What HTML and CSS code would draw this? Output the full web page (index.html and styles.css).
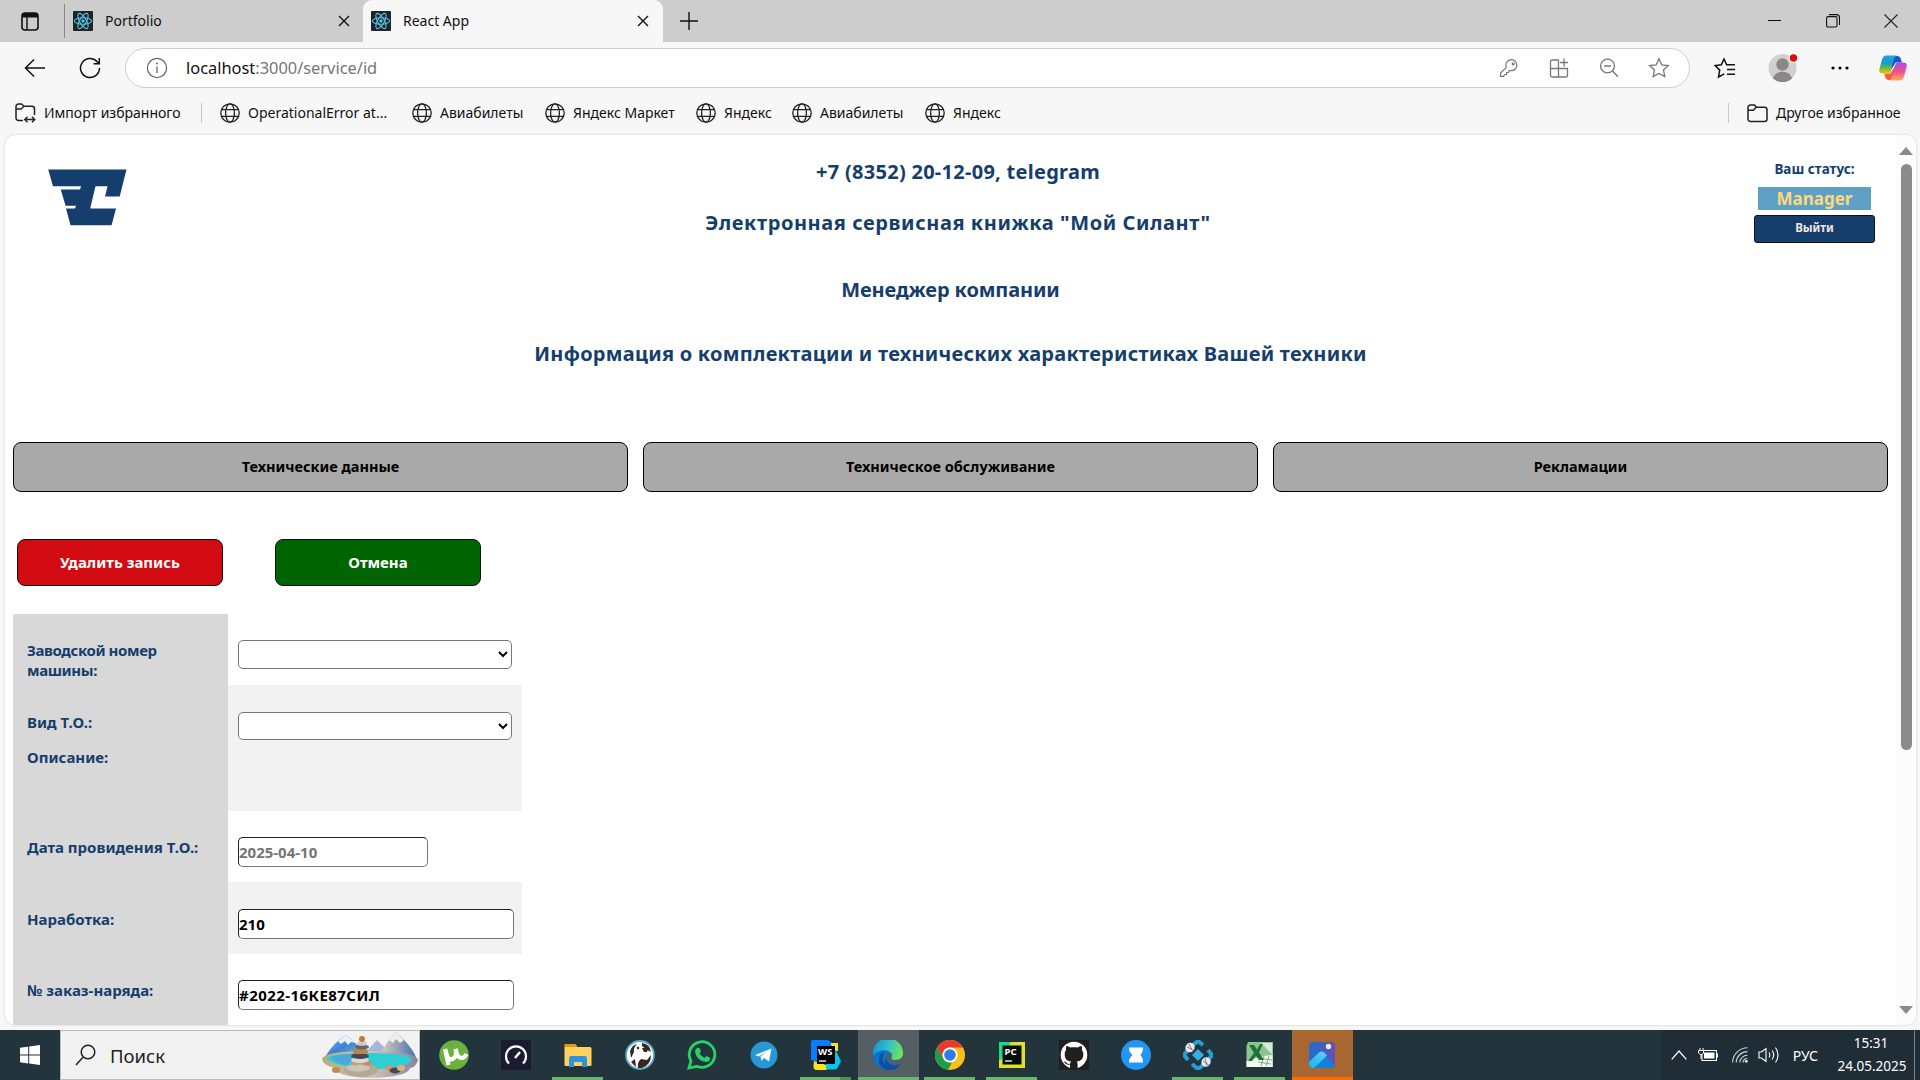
FILE: index.html
```html
<!DOCTYPE html>
<html lang="ru">
<head>
<meta charset="utf-8">
<title>React App</title>
<link rel="stylesheet" href="styles.css">
</head>
<body>
<svg class="defs" width="0" height="0">
  <defs>
    <symbol id="react" viewBox="0 0 20 20">
      <rect width="20" height="20" rx="1" fill="#20232a"/>
      <g fill="none" stroke="#57c4e0" stroke-width="1.1">
        <ellipse cx="10" cy="10" rx="8.6" ry="3.3"/>
        <ellipse cx="10" cy="10" rx="8.6" ry="3.3" transform="rotate(60 10 10)"/>
        <ellipse cx="10" cy="10" rx="8.6" ry="3.3" transform="rotate(120 10 10)"/>
      </g>
      <circle cx="10" cy="10" r="1.7" fill="#57c4e0"/>
    </symbol>
    <symbol id="cross" viewBox="0 0 12 12"><path d="M1 1l10 10M11 1L1 11" fill="none" stroke="#111" stroke-width="1.4"/></symbol>
    <symbol id="globe" viewBox="0 0 20 20">
      <g fill="none" stroke="#222" stroke-width="1.3"><circle cx="10" cy="10" r="9.2"/><ellipse cx="10" cy="10" rx="4.4" ry="9.2"/><path d="M1.6 6.6h16.8M1.6 13.4h16.8"/></g>
    </symbol>
  </defs>
</svg>

<div class="tabbar">
  <div class="workspace"><svg width="18" height="19" viewBox="0 0 18 19"><rect x="1" y="1" width="16" height="17" rx="3" fill="none" stroke="#111" stroke-width="1.6"/><path d="M1 5.5V4a3 3 0 013-3h10a3 3 0 013 3v1.500z" fill="#111"/><path d="M6 5v13" stroke="#111" stroke-width="1.4"/></svg></div>
  <div class="tab"><svg width="20" height="20"><use href="#react"/></svg><span>Portfolio</span><svg class="close" width="12" height="12"><use href="#cross"/></svg></div>
  <div class="tab active"><svg width="20" height="20"><use href="#react"/></svg><span>React App</span><svg class="close" width="12" height="12"><use href="#cross"/></svg></div>
  <svg class="newtab" width="18" height="18" viewBox="0 0 18 18"><path d="M9 0v18M0 9h18" stroke="#111" stroke-width="1.4"/></svg>
  <div class="winctl">
    <svg width="14" height="14" viewBox="0 0 14 14"><path d="M0 6.500h13" stroke="#111"/></svg>
    <svg width="14" height="14" viewBox="0 0 14 14"><g fill="none" stroke="#111" stroke-width="1.100"><rect x=".6" y="2.600" width="10.400" height="10.400" rx="1.500"/><path d="M3 .6h7.500a3 3 0 013 3V11"/></g></svg>
    <svg width="14" height="14" viewBox="0 0 14 14"><path d="M.5.5l13 13M13.500.5l-13 13" stroke="#222" stroke-width="1.100"/></svg>
  </div>
</div>

<div class="toolbar">
  <div class="cell"><svg width="22" height="20" viewBox="0 0 22 20"><path d="M21 10H1.500M10 1.500L1.500 10l8.500 8.500" fill="none" stroke="#111" stroke-width="1.500"/></svg></div>
  <div class="cell"><svg width="22" height="22" viewBox="0 0 22 22"><path d="M20.500 11A9.500 9.500 0 1118 4.600L20 6.500M20.300 1v5.700h-5.700" fill="none" stroke="#111" stroke-width="1.500"/></svg></div>
  <div class="address">
    <svg class="info" width="22" height="22" viewBox="0 0 22 22"><circle cx="11" cy="11" r="9.600" fill="none" stroke="#666" stroke-width="1.200"/><path d="M11 9.500V16" stroke="#666" stroke-width="1.300"/><circle cx="11" cy="6.600" r="1" fill="#666"/></svg>
    <div class="url"><b>localhost</b>:3000/service/id</div>
    <div class="acts">
      <svg width="20" height="20" viewBox="0 0 20 20"><g fill="none" stroke="#777" stroke-width="1.200"><path d="M7.300 9.400A5.500 5.500 0 1112 12.700l-1.700-.1-.9 1.900H7.600v2H5.800L4.500 18.400H1.600v-3.300z"/><circle cx="14.200" cy="5.800" r="1"/></g></svg>
      <svg width="20" height="20" viewBox="0 0 20 20"><g fill="none" stroke="#777" stroke-width="1.300"><path d="M9.500 2H3.200A1.700 1.700 0 001.500 3.700v13.600A1.700 1.700 0 003.200 19h13.600a1.700 1.700 0 001.700-1.700v-6.800h-17M9.500 2v17M15 .5v8M11 4.500h8"/></g></svg>
      <svg width="20" height="20" viewBox="0 0 20 20"><g fill="none" stroke="#777" stroke-width="1.400"><circle cx="8.500" cy="8" r="6.900"/><path d="M5 8h7M13.500 13l5.500 5.800"/></g></svg>
      <svg width="22" height="22" viewBox="0 0 22 22"><path d="M11 1.800l2.800 6 6.600.8-4.900 4.500 1.300 6.500L11 16.400l-5.800 3.200 1.300-6.500L1.600 8.600l6.600-.8z" fill="none" stroke="#777" stroke-width="1.300"/></svg>
    </div>
  </div>
  <div class="cell"><svg width="22" height="22" viewBox="0 0 22 22"><g fill="none" stroke="#111" stroke-width="1.500"><path d="M13 7.800h-.4L10 2 7.300 7.800 1.200 8.600l4.500 4.500L4.500 20l5.800-3.200M13 7.800h8M13 12.500h8M13 17.200h8"/></g></svg></div>
  <div class="cell"><svg width="32" height="34" viewBox="0 0 32 34"><circle cx="15.500" cy="17" r="14" fill="#d2d0ce"/><circle cx="15.500" cy="13.500" r="6.200" fill="#8a8886"/><path d="M5.800 27.200a10.500 10.500 0 0119.400 0A14 14 0 015.800 27.200z" fill="#8a8886"/><circle cx="26.500" cy="7" r="5" fill="#f7f7f7"/><circle cx="26.500" cy="7" r="3.700" fill="#e00b0b"/></svg></div>
  <div class="cell"><svg width="18" height="4" viewBox="0 0 18 4"><circle cx="2" cy="2" r="1.600"/><circle cx="9" cy="2" r="1.600"/><circle cx="16" cy="2" r="1.600"/></svg></div>
  <div class="cell"><svg width="28" height="26" viewBox="0 0 28 26">
    <defs>
      <linearGradient id="cpA" x1="0" y1="0" x2="0" y2="1"><stop offset="0" stop-color="#1ba4ee"/><stop offset=".45" stop-color="#1b9ac0"/><stop offset=".7" stop-color="#6fbb3c"/><stop offset="1" stop-color="#f2c500"/></linearGradient>
      <linearGradient id="cpB" x1="0" y1="0" x2="0" y2="1"><stop offset="0" stop-color="#a64bf0"/><stop offset=".5" stop-color="#ee5090"/><stop offset="1" stop-color="#ffab5c"/></linearGradient>
    </defs>
    <path d="M7 1h11q3 0 3.800 3l1 3.500h-6L10 18z" fill="#1555cf"/>
    <path d="M21 25H10q-3 0-3.800-3l-1-3.500h6L18 8z" fill="#f1613f"/>
    <path d="M7.500.5H18q-2.400.8-3.200 4L12 15.500q-.8 3-3.800 3H3.400Q-.4 18.500.4 14L3 4.500Q4.200.5 7.500.5z" fill="url(#cpA)"/>
    <path d="M20.500 25.500H10q2.400-.8 3.200-4L16 10.500q.8-3 3.800-3h4.800q3.800 0 3 4.500L25 21.500q-1.200 4-4.500 4z" fill="url(#cpB)"/>
  </svg></div>
</div>

<div class="bookmarks">
  <div class="bm"><svg width="21" height="20" viewBox="0 0 21 20"><g fill="none" stroke="#222" stroke-width="1.500"><path d="M8 17.500H3.500A2.500 2.500 0 011 15V3.500A2.500 2.500 0 013.500 1h3l2.500 2.300h8A2.500 2.500 0 0119.500 5.800V12M1 6h5l3-2.700M10 16.500h9.500M12.500 13.800L9.800 16.500l2.700 2.700M17 13.800l2.700 2.700L17 19.200"/></g></svg><span>Импорт избранного</span></div>
  <i class="sep"></i>
  <div class="bm"><svg width="20" height="20"><use href="#globe"/></svg><span>OperationalError at...</span></div>
  <div class="bm"><svg width="20" height="20"><use href="#globe"/></svg><span>Авиабилеты</span></div>
  <div class="bm"><svg width="20" height="20"><use href="#globe"/></svg><span>Яндекс Маркет</span></div>
  <div class="bm"><svg width="20" height="20"><use href="#globe"/></svg><span>Яндекс</span></div>
  <div class="bm"><svg width="20" height="20"><use href="#globe"/></svg><span>Авиабилеты</span></div>
  <div class="bm"><svg width="20" height="20"><use href="#globe"/></svg><span>Яндекс</span></div>
  <i class="sep"></i>
  <div class="bm"><svg width="21" height="19" viewBox="0 0 21 19"><path d="M1 6.200h5.300l3-2.900L7.500 1h-4A2.500 2.500 0 001 3.500V15A2.500 2.500 0 003.500 17.500h14A2.500 2.500 0 0020 15V5.800a2.500 2.500 0 00-2.500-2.500H9.300" fill="none" stroke="#222" stroke-width="1.500"/></svg><span>Другое избранное</span></div>
</div>

<div class="viewport">
  <main class="page">
    <header class="top">
      <div class="logo"><svg width="79" height="57" viewBox="48 168.500 79 57"><path fill="#163e6c" d="M48.200 169h78.300l-6.800 27H105l2.600-10.300H95.500L90.200 208H116l-4.400 16.700H70.500L66 208h9l1-2.700H65.600L60.700 189H80l1-3.300H53z"/></svg></div>
      <div class="titles">
        <div class="phone">+7 (8352) 20-12-09, telegram</div>
        <div class="title">Электронная сервисная книжка "Мой Силант"</div>
      </div>
      <div class="status">
        <div class="status-label">Ваш статус:</div>
        <div class="role">Manager</div>
        <button class="logout">Выйти</button>
      </div>
    </header>
    <h2 class="manager">Менеджер компании</h2>
    <h2 class="about">Информация о комплектации и технических характеристиках Вашей техники</h2>
    <nav class="nav"><button>Технические данные</button><button>Техническое обслуживание</button><button>Рекламации</button></nav>
    <div class="actions"><button class="delete">Удалить запись</button><button class="cancel">Отмена</button></div>
    <form class="form">
      <div class="row r1"><label class="tight">Заводской номер<br>машины:</label><div class="field"><select class="tall"></select></div></div>
      <div class="row r2 alt"><label>Вид Т.О.:<span class="desc">Описание:</span></label><div class="field"><select></select></div></div>
      <div class="row r3"><label>Дата провидения Т.О.:</label><div class="field"><input class="short" placeholder="2025-04-10"></div></div>
      <div class="row r4 alt"><label>Наработка:</label><div class="field"><input value="210"></div></div>
      <div class="row r5"><label>№ заказ-наряда:</label><div class="field"><input class="order" value="#2022-16КЕ87СИЛ"></div></div>
    </form>
  </main>
  <div class="scroll">
    <svg width="14" height="8" viewBox="0 0 14 8"><path d="M7 0l7 8H0z" fill="#8b8b8b"/></svg>
    <div class="thumb"></div>
    <svg class="down" width="14" height="8" viewBox="0 0 14 8"><path d="M7 8l7-8H0z" fill="#8b8b8b"/></svg>
  </div>
</div>

<div class="taskbar">
  <div class="start"><svg width="20" height="20" viewBox="0 0 20 20"><path fill="#fff" d="M0 2.800L8.200 1.700v7.900H0zM9.200 1.500L20 0v9.600H9.200zM0 10.500h8.200v7.900L0 17.300zM9.200 10.500H20V20L9.200 18.600z"/></svg></div>
  <div class="search">
    <svg width="21" height="22" viewBox="0 0 21 22"><g fill="none" stroke="#222" stroke-width="1.500"><circle cx="13" cy="8" r="6.800"/><path d="M8.200 13L1 21"/></g></svg>
    <span>Поиск</span>
    <svg class="scene" width="96" height="46" viewBox="0 0 96 46">
      <defs><linearGradient id="mtA" x1="0" y1="0" x2="1" y2="1"><stop offset="0" stop-color="#8dbbe8"/><stop offset=".5" stop-color="#3b83cf"/><stop offset="1" stop-color="#8fb6dc"/></linearGradient>
      <linearGradient id="mtB" x1="0" y1="0" x2="1" y2="0"><stop offset="0" stop-color="#d8cfc6"/><stop offset=".5" stop-color="#94a3b5"/><stop offset="1" stop-color="#3a72b5"/></linearGradient>
      <linearGradient id="sand" x1="0" y1="0" x2="1" y2="0"><stop offset="0" stop-color="#b5ab7c"/><stop offset=".5" stop-color="#d6c6b8"/><stop offset="1" stop-color="#8d7f9d"/></linearGradient></defs>
      <path d="M44 20l11-12 12 12z" fill="#a9b4d8"/>
      <path d="M3 25Q12 10 24 3q12 8 18 21z" fill="url(#mtA)"/><path d="M16 9l8-6 10 8-5-1-3 3-3-4-4 3z" fill="#eaf1f8"/>
      <path d="M58 22Q66 8 74 0q14 12 20 25z" fill="url(#mtB)"/><path d="M67 8l7-8 8 8-4 3-4-4-3 4z" fill="#f1eeea"/>
      <path d="M0 27q2-8 48-8t48 9q-2 7-8 8-2 9-40 10-32-1-36-10Q1 33 0 27z" fill="url(#sand)"/>
      <path d="M5 26q6-5 43-5t42 6q-2 9-40 10Q10 35 5 26z" fill="#2ccfd4"/><path d="M9 25q8-3 30-4L24 33q-14-3-15-8z" fill="#4aa9d9"/>
      <ellipse cx="39" cy="38" rx="17" ry="7" fill="#b3a797"/><ellipse cx="36" cy="36" rx="12" ry="3.500" fill="#cfc5b7"/>
      <ellipse cx="33" cy="31" rx="4" ry="2.500" fill="#d39a62"/><ellipse cx="45" cy="31" rx="4" ry="2.500" fill="#c98b52"/>
      <ellipse cx="38" cy="28" rx="9" ry="3" fill="#d9dadd"/><ellipse cx="38" cy="24" rx="9" ry="3" fill="#454953"/><rect x="31" y="17" width="15" height="5" rx="2.500" fill="#b98652"/><ellipse cx="40" cy="15" rx="7" ry="2.500" fill="#62656b"/><ellipse cx="40" cy="11.500" rx="5" ry="2.300" fill="#c9cacc"/><circle cx="40" cy="7" r="3" fill="#c27a38"/>
      <ellipse cx="14" cy="38" rx="4" ry="3" fill="#c48a55"/><ellipse cx="68" cy="36" rx="4" ry="3" fill="#c99b6a"/><ellipse cx="73" cy="38.500" rx="5.500" ry="3" fill="#474954"/><ellipse cx="79" cy="36" rx="4" ry="3" fill="#dbb183"/>
    </svg>
  </div>
  <div class="apps">
    <div class="app"><svg width="30" height="30" viewBox="0 0 30 30"><circle cx="15" cy="15" r="14.800" fill="#68b23d"/><path d="M6 9l3.500 16M6.500 10q2 11 7 9t3-10q2 9 6 9 3 0 5-4" fill="none" stroke="#fff" stroke-width="4.200"/></svg></div>
    <div class="app"><svg width="30" height="30" viewBox="0 0 30 30"><rect width="30" height="30" fill="#1b1a31"/><path d="M8 23.500A10 10 0 1122 23.500" fill="none" stroke="#fff" stroke-width="2.200"/><path d="M14 18l5-6" stroke="#fff" stroke-width="2.500"/></svg></div>
    <div class="app run"><svg width="30" height="30" viewBox="0 0 30 30"><path d="M1.500 4h11l2 3h-13z" fill="#e39b0b"/><path d="M1.500 7H27q1.500 0 1.500 1.500V25q0 1-1 1H2.500q-1 0-1-1z" fill="#fdd25f"/><path d="M6 27V18q0-2 2-2h14q2 0 2 2v9h-5v-5h-8v5z" fill="#3191dc"/></svg></div>
    <div class="app"><svg width="30" height="30" viewBox="0 0 30 30"><circle cx="15" cy="15" r="14" fill="#fff" stroke="#51aebb" stroke-width="1.800"/><path d="M5 11q2-6 7-7-4 4-3 8l-3 6zM17 3q8 1 9 9l-4-2-5-4zM17 8h6l-1 4h-3zM13 28q-1-6 3-9l6 1 4-5q0 10-9 13zM6 22l4-3 1 8z" fill="#382620"/><circle cx="13" cy="8" r="1.200" fill="#222"/></svg></div>
    <div class="app"><svg width="30" height="30" viewBox="0 0 30 30"><path d="M2 28l2-7A12.800 12.800 0 1110 26.300z" fill="none" stroke="#25d366" stroke-width="2.800"/><path d="M10 8q2-1 3 1l1 2.500-1.500 2q2 3 5 4.500l2-2 3.500 1.700q.5 4-4 4.300Q10 21 8 12q0-3 2-4z" fill="#25d366"/></svg></div>
    <div class="app"><svg width="30" height="30" viewBox="0 0 30 30"><circle cx="15" cy="15" r="13.500" fill="#2599d6"/><path d="M6 15l16.500-6.500L20 21.500l-5-3.500-2.500 3-1-4.500L18 11l-8 5.500z" fill="#fff"/></svg></div>
    <div class="app run two"><svg width="30" height="30" viewBox="0 0 30 30"><path d="M0 2q0-2 2-2h15l7 5-4 20-20-5z" fill="#087cfa"/><path d="M20 3h7v8h-6zM3 21l12 4 1 5H6q-4 0-3.500-4z" fill="#f7e51d"/><path d="M24 9l6 12-4 8q-6 1-11 0V22z" fill="#07c3f2"/><rect x="6" y="6" width="18" height="18"/><text x="7" y="15" class="jb">WS</text><path d="M8 21h7" stroke="#fff" stroke-width="1.300"/></svg></div>
    <div class="app run full"><svg width="30" height="30" viewBox="0 0 30 30">
      <defs><linearGradient id="edA" x1="0" y1=".3" x2="1" y2=".5"><stop offset="0" stop-color="#168fd9"/><stop offset=".5" stop-color="#30c1c9"/><stop offset="1" stop-color="#70e457"/></linearGradient></defs>
      <circle cx="15" cy="15" r="15" fill="#0e72c8"/><path d="M0 13A15 15 0 0130 13.500q0 6-7 6.500-5 0-5-2 2-3-1-6-4-3-9-1.500Q3 11.500 0 15z" fill="url(#edA)"/><path d="M10 15q-2 8 5 11 7 2 12-1-5 6-13 5Q5 27 6 18q.5-5 6-6-2 1-2 3z" fill="#0d4f9e"/><path d="M17 12q3 3 1 6 0 2 5 2 5-.2 7-4v4l-2.600 4.300Q21 26 16 22q-5-5-1-9z" fill="#555e62"/><path d="M13 18q1 6 7 7 4 .5 7-1-1 2-3 3-7 2-11-2-2-3 0-7z" fill="#0d4f9e"/></svg></div>
    <div class="app run"><svg width="30" height="30" viewBox="0 0 30 30"><circle cx="15" cy="15" r="15" fill="#fbc116"/><path d="M2 7.500A15 15 0 0128 7.500H15a7.500 7.500 0 00-6.500 11.300z" fill="#e33b2e"/><path d="M2 7.500l6.500 11.200A7.500 7.500 0 0015 22.500h2L13 29.900A15 15 0 012 7.500z" fill="#229a4b"/><circle cx="15" cy="15" r="7.500" fill="#fff"/><circle cx="15" cy="15" r="5.800" fill="#2e7bea"/></svg></div>
    <div class="app run"><svg width="30" height="30" viewBox="0 0 30 30"><rect x="2" y="2" width="26" height="26" fill="#dfe02f"/><path d="M2 2h12L4 20H2z" fill="#21d789"/><rect x="5.500" y="5.500" width="19" height="19" fill="#03100a"/><text x="7.500" y="15" class="jb">PC</text><path d="M8 21h7" stroke="#fff" stroke-width="1.300"/></svg></div>
    <div class="app"><svg width="30" height="30" viewBox="0 0 30 30"><rect width="30" height="30" fill="#211e1f"/><path d="M11 27.500c.3-1 .3-3 .3-3-5 1-5-2.500-6.300-3 2-.6 3 1.500 3 1.500 1.300 1.500 3 .8 3.500.6.100-1 .6-1.700 1-2-4-.5-7-2-7-7.500 0-1.600.6-3 1.500-4-.2-.6-.6-2 .2-4.100 1.500-.2 3.200.9 4.300 1.600 2.300-.6 4.700-.6 7 0 1.100-.7 2.800-1.800 4.300-1.600.8 2.100.4 3.500.2 4.100.9 1 1.500 2.400 1.500 4 0 5.500-3.200 7-7.200 7.500.7.600 1.200 1.500 1.200 3v2.900A13 13 0 0015 2a13 13 0 00-4 25.500zM18.500 27.500A13 13 0 0015 2" fill="#211e1f"/><circle cx="15" cy="15" r="13.300" fill="#fff"/><path d="M11 29v-4.500c-5 1-5-2.500-6.300-3 2-.6 3 1.500 3 1.500 1.300 1.500 3 .8 3.500.6.100-1 .6-1.700 1-2-4-.5-6.500-2-6.500-7.500 0-1.600.6-3 1.500-4-.2-.6-.6-2 .2-4.100 1.500-.2 2.700.9 3.800 1.600 2.300-.6 5.300-.6 7.600 0 1.100-.7 2.300-1.800 3.800-1.600.8 2.100.4 3.500.2 4.100.9 1 1.500 2.400 1.500 4 0 5.500-2.700 7-6.700 7.500.7.600 1 1.500 1 3V29z" fill="#211e1f"/></svg></div>
    <div class="app"><svg width="30" height="30" viewBox="0 0 30 30"><circle cx="15" cy="15" r="15" fill="#2196f3"/><path d="M8 7.500h14v2q0 2-2.500 5.500 2.500 3.500 2.500 5.500v2H8v-2q0-2 3.500-5.500Q8 11.500 8 9.500z" fill="#fff"/></svg></div>
    <div class="app run"><svg width="30" height="30" viewBox="0 0 30 30"><g fill="none" stroke="#249fd9" stroke-width="4"><path d="M10 5l5-4 5 4M25 10l4 5-3 4M20 25l-5 4-6-5M5 20l-4-5 4-5"/></g><path d="M15 9l6 6-6 6-6-6z" fill="#35aee4"/><ellipse cx="7" cy="7.500" rx="4.500" ry="5" fill="#ece9f2" transform="rotate(35 7 7.500)"/><ellipse cx="23" cy="22" rx="4.500" ry="5" fill="#ece9f2" transform="rotate(35 23 22)"/><path d="M4 7l6 3M6 4l3 6M20 21l6 4M22 18l2 8" stroke="#6a6583" stroke-width=".8"/></svg></div>
    <div class="app run"><svg width="30" height="30" viewBox="0 0 30 30"><path d="M3 2h25v25H1.500V6z" fill="#8cc490"/><path d="M16 3h11v11z" fill="#d7ecd7"/><path d="M1.500 21q13-5 26-6v12h-26z" fill="#f3f7f2"/><path d="M14 18l13 2M13 22l13 2M19 16l-3 10M24 16l-3 10" stroke="#79ad7d" stroke-width="1"/><path d="M4 5h5l3 4.500L15 4h3l-4 8.500 5 7.500h-5l-3-4-4 5H3l6-8z" fill="#207334"/></svg></div>
    <div class="app photos"><svg width="30" height="30" viewBox="0 0 30 30">
      <defs><linearGradient id="phA" x1="0" y1="0" x2="1" y2="0"><stop offset="0" stop-color="#1f6fd0"/><stop offset="1" stop-color="#6650b5"/></linearGradient><linearGradient id="phB" x1="0" y1="1" x2="1" y2="0"><stop offset="0" stop-color="#19b4ee"/><stop offset="1" stop-color="#5ed2f7"/></linearGradient></defs>
      <rect x="2" y="2" width="26" height="26" rx="4" fill="url(#phA)"/><path d="M14 12l14 13q-1 3-4 3H8z" fill="#1481d8"/><path d="M2 22l10-9.500q2.500-2 5 0l3 3L7 28Q2 28 2 24z" fill="url(#phB)"/><circle cx="21.500" cy="6.500" r="2.700" fill="#e8f0ff"/></svg></div>
  </div>
  <div class="tray">
    <svg class="t1" width="16" height="10" viewBox="0 0 16 10"><path d="M.7 9.300L8 1l7.300 8.300" fill="none" stroke="#fff" stroke-width="1.200"/></svg>
    <svg class="t2" width="21" height="14" viewBox="0 0 21 14"><rect x="4" y="2.500" width="14.500" height="10" fill="none" stroke="#fff"/><rect x="6" y="4.500" width="10.500" height="6" fill="#fff"/><path d="M19.500 5.500v4M2 0v2M5 0v2M.5 2.500h5V5L4 6.500H2.500L.5 5zM3 6v5" stroke="#fff" fill="#1f2d36"/></svg>
    <svg class="t3" width="16" height="16" viewBox="0 0 16 16"><g fill="none" stroke="#cfd4d6" stroke-width="1.100"><path d="M.6 15.500A15 15 0 0115.500.8M4.200 15.500A11.200 11.200 0 0115.500 4.600M7.800 15.500a7.600 7.600 0 017.700-7.200M11 15.500a4 4 0 014.500-4"/></g><circle cx="14.300" cy="14.300" r="1.400" fill="#fff"/></svg>
    <svg class="t4" width="22" height="18" viewBox="0 0 22 18"><g fill="none" stroke="#fff" stroke-width="1.100"><path d="M1 6h2.500L8 2.500v13L3.500 12H1zM11 6.500q1.800 2.500 0 5M14 4.500q3.500 4.500 0 9M17.500 1.500q5 7.500 0 15"/></g></svg>
    <span class="lang">РУС</span>
    <div class="clock"><div class="time">15:31</div><div class="date">24.05.2025</div></div>
    <i class="peek"></i>
  </div>
</div>
</body>
</html>
```
FILE: styles.css
```css
* { box-sizing: border-box; }
body { margin: 0; width: 1920px; height: 1080px; overflow: hidden; display: flex; flex-direction: column; background: #f7f7f7; color: #111; font: 14px "Noto Sans", sans-serif; }
svg { display: block; flex: none; }
.defs { position: absolute; }
button, select, input { font-family: inherit; font-weight: 700; margin: 0; }

.tabbar { display: flex; align-items: center; height: 42px; background: #cdcdcd; }
.workspace { width: 65px; height: 34px; padding-left: 21px; display: flex; align-items: center; border-right: 1px solid #888; }
.tab { display: flex; align-items: center; width: 298px; height: 42px; padding: 0 13px 0 8px; }
.tab span { margin-left: 12px; line-height: 20px; padding-bottom: 1px; }
.tab .close { margin-left: auto; }
.tab.active { width: 300px; border-radius: 9px 9px 0 0; background: #f7f7f7; padding-right: 14px; }
.newtab { margin-left: 17px; }
.winctl { display: flex; gap: 44px; margin-left: auto; margin-right: 22px; }

.toolbar { display: grid; grid-template-columns: 70px 40px 1565px 70px 46px 68px 38px; height: 52px; align-items: center; }
.cell { display: grid; place-items: center; height: 52px; }
.address { display: flex; align-items: center; height: 40px; border: 1px solid #cdcdcd; border-radius: 20px; background: #fff; width: 1565px; }
.toolbar .address { margin-left: 15px; }
.toolbar { column-gap: 0; grid-template-columns: 70px 40px 1580px 70px 46px 68px 38px; }
.info { margin-left: 20px; }
.url { margin-left: 18px; font-size: 16.4px; line-height: 24px; color: #767676; }
.url b { font-weight: 400; color: #111; }
.acts { margin-left: auto; margin-right: 5px; display: grid; grid-template-columns: repeat(4, 50px); place-items: center; }

.bookmarks { display: grid; grid-template-columns: 186px 19px 192px 133px 151px 96px 133px 803px 19px 160px; padding-left: 15px; height: 38px; align-items: center; }
.bm { display: flex; align-items: center; gap: 8px; white-space: nowrap; line-height: 20px; }
.sep { width: 1px; height: 20px; background: #c8c8c8; }

.viewport { display: flex; width: 1911px; height: 890px; margin: 3px 0 5px 5px; border-radius: 10px; background: #fff; overflow: hidden; box-shadow: 0 0 2px #bbb; }
.page { width: 1891px; height: 890px; color: #163e6c; font-weight: 700; }
.scroll { width: 20px; background: #fcfcfc; padding-top: 12px; display: flex; flex-direction: column; align-items: center; }
.thumb { width: 11px; height: 586px; margin: 9px 0 256px; border-radius: 6px; background: #8b8b8b; }

.top { display: grid; grid-template-columns: 165px 1fr 150px; height: 114px; }
.logo { padding: 33.500px 0 0 43px; }
.titles { padding-top: 12px; text-align: center; font-size: 20px; }
.phone { line-height: 50px; letter-spacing: .28px; }
.title { line-height: 52px; letter-spacing: .57px; }
.status { display: flex; flex-direction: column; align-items: center; padding: 24px 13px 0 0; }
.status-label { font-size: 13.500px; line-height: 20px; }
.role { width: 113px; height: 23px; margin-top: 8px; background: #5fa0c6; color: #ffd977; text-align: center; font-size: 17px; line-height: 23px; }
.logout { width: 121px; height: 28px; margin-top: 5px; padding: 0 0 3px; border: 1px solid #111; border-radius: 3px; background: #163e6c; color: #ece8df; font-size: 11.500px; }
.manager, .about { margin: 0; text-align: center; font-size: 20px; line-height: 64px; }
.manager { margin-top: 9px; letter-spacing: -.12px; }
.about { letter-spacing: .25px; }
.nav { display: flex; gap: 15px; margin: 56px 0 0 8px; }
.nav button { width: 615px; height: 50px; border: 1px solid #000; border-radius: 8px; background: #a9a9a9; color: #000; font-size: 14.500px; padding: 0 0 2px; }
.actions { display: flex; gap: 52px; margin: 47px 0 0 12px; }
.actions button { width: 206px; height: 47px; border: 1px solid #111; border-radius: 8px; color: #fff; font-size: 15px; padding: 0 0 1px; }
.delete { background: #d20a11; }
.cancel { background: #006400; }

.form { margin: 28px 0 0 8px; font-size: 15px; line-height: 20px; width: 509px; }
.row { display: grid; grid-template-columns: 215px 294px; height: 71px; }
.row label { background: #d8d8d8; padding: 26px 0 0 14px; white-space: nowrap; }
.row .tight { letter-spacing: -.4px; }
.field { padding: 26px 0 0 10px; }
.alt .field { background: #f2f2f2; padding-top: 27px; }
.alt label { padding-top: 27px; }
.r2 { height: 126px; }
.r4 { height: 72px; }
.desc { display: block; margin-top: 15px; }
.form select { display: block; width: 274px; height: 28px; border: 1px solid #767676; border-radius: 5px; background: #fff; color: #000; }
.form .tall { height: 29px; }
.form input { display: block; width: 276px; height: 30px; padding: 0; border: 1px solid; border-color: #222 #767676 #767676 #222; border-radius: 5px; background: #fff; color: #000; font-size: 15px; }
.form .short { width: 190px; }
.form input::placeholder { color: #757575; }
.form .order { letter-spacing: .45px; }

.taskbar { display: flex; height: 50px; background: #24343d; }
.start { width: 60px; display: grid; place-items: center; }
.search { display: flex; align-items: center; width: 360px; padding: 0 1px 0 14px; border: 1px solid #bcbcbc; background: #f2f2f2; font-size: 18.500px; color: #222; }
.search span { margin-left: 14px; }
.scene { margin-left: auto; }
.apps { display: flex; margin-left: 3px; }
.app { width: 62px; height: 50px; padding: 10px 16px 0; }
.run { background: linear-gradient(#67b868, #67b868) 5px 47px / 51px 3px no-repeat; }
.two { background: linear-gradient(90deg, #67b868 40px, #4b8f54 40px) 5px 47px / 51px 3px no-repeat; }
.full { background: linear-gradient(#67b868, #67b868) 1px 47px / 61px 3px no-repeat, linear-gradient(#555e62, #555e62) 1px 0 / 61px 50px no-repeat; }
.photos { background: linear-gradient(#ff6d00, #ff6d00) 1px 47px / 61px 3px no-repeat, linear-gradient(#a86630, #a86630) 1px 0 / 61px 50px no-repeat; }
.jb { font: 700 9.500px "Noto Sans", sans-serif; fill: #fff; }
.tray { display: flex; align-items: center; margin-left: auto; color: #fff; background: #1f2d36; padding-left: 10px; }
.t2 { margin-left: 11px; }
.t3 { margin-left: 13px; }
.t4 { margin-left: 10px; }
.lang { margin-left: 13px; font-size: 14px; }
.clock { width: 70px; margin-left: 18px; text-align: center; font-size: 13.500px; line-height: 23px; white-space: nowrap; }
.clock .date { margin-right: -2px; }
.peek { width: 1px; height: 50px; margin: 0 5px 0 8px; background: #7b8388; }
```
